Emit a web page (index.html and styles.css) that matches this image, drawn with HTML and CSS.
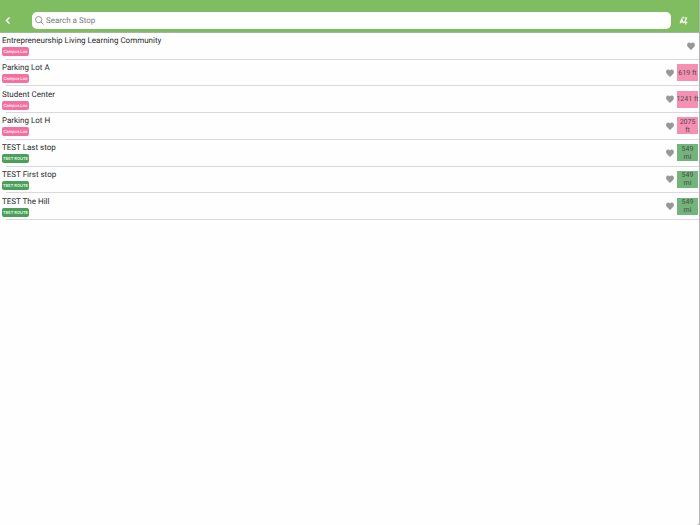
FILE: index.html
```
<!DOCTYPE html>
<html lang="en">
<head>
    <meta charset="UTF-8">
    <title>Stops</title>
    <meta name="viewport" content="width=device-width, initial-scale=1.0">
    <link rel="stylesheet" href="styles.css">
</head>
<body>
    <svg class="sprite" aria-hidden="true">
        <symbol id="heart" viewBox="0 0 16 16" preserveAspectRatio="none">
            <path d="M8 16 1.500 9.500C-1.200 6 .6 1.200 4.200 1 6 1 7.300 1.900 8 3.200 8.700 1.900 10 1 11.800 1 15.400 1.200 17.200 6 14.500 9.500Z"/>
        </symbol>
    </svg>
    <div class="app">
        <header class="topbar">
            <button class="icon-btn back" aria-label="Back">
                <svg viewBox="0 0 8 12"><path d="M6 2 2 6l4 4"/></svg>
            </button>
            <label class="search">
                <svg viewBox="0 0 16 16"><circle cx="6.500" cy="6.500" r="5.500"/><path d="m10.500 10.500 4.500 4.500"/></svg>
                <input type="search" placeholder="Search a Stop" aria-label="Search a Stop">
            </label>
            <button class="icon-btn sort" aria-label="Sort">
                <svg viewBox="0 0 16 16">
                    <path d="m2 13 3-8 3 8M3 10.500h4M9.500 3.500h4l-3.500 7.500h5"/>
                    <path d="m8 1-1 3M12 12v3"/>
                </svg>
            </button>
        </header>
        <ul class="stops">
            <li class="stop">
                <div class="info">
                    <span class="name">Entrepreneurship Living Learning Community</span>
                    <span class="route campus">Campus Loo</span>
                </div>
                <button class="fav" aria-label="Favorite"><svg><use href="#heart"/></svg></button>
            </li>
            <li class="stop">
                <div class="info">
                    <span class="name">Parking Lot A</span>
                    <span class="route campus">Campus Loo</span>
                </div>
                <button class="fav" aria-label="Favorite"><svg><use href="#heart"/></svg></button>
                <span class="distance near">619 ft</span>
            </li>
            <li class="stop">
                <div class="info">
                    <span class="name">Student Center</span>
                    <span class="route campus">Campus Loo</span>
                </div>
                <button class="fav" aria-label="Favorite"><svg><use href="#heart"/></svg></button>
                <span class="distance near">1241 ft</span>
            </li>
            <li class="stop">
                <div class="info">
                    <span class="name">Parking Lot H</span>
                    <span class="route campus">Campus Loo</span>
                </div>
                <button class="fav" aria-label="Favorite"><svg><use href="#heart"/></svg></button>
                <span class="distance near">2075<br>ft</span>
            </li>
            <li class="stop">
                <div class="info">
                    <span class="name">TEST Last stop</span>
                    <span class="route test">TEST ROUTE</span>
                </div>
                <button class="fav" aria-label="Favorite"><svg><use href="#heart"/></svg></button>
                <span class="distance far">549<br>mi</span>
            </li>
            <li class="stop">
                <div class="info">
                    <span class="name">TEST First stop</span>
                    <span class="route test">TEST ROUTE</span>
                </div>
                <button class="fav" aria-label="Favorite"><svg><use href="#heart"/></svg></button>
                <span class="distance far">549<br>mi</span>
            </li>
            <li class="stop">
                <div class="info">
                    <span class="name">TEST The Hill</span>
                    <span class="route test">TEST ROUTE</span>
                </div>
                <button class="fav" aria-label="Favorite"><svg><use href="#heart"/></svg></button>
                <span class="distance far">549<br>mi</span>
            </li>
        </ul>
    </div>
</body>
</html>
```
FILE: styles.css
```
:root {
    --bar: #80bc60;
    --pink: #f4709f;
    --pink-light: #f590b2;
    --green: #4aa058;
    --green-light: #72b47a;
    --line: #d9d9d9;
    --icon: #979797;
}
* {
    box-sizing: border-box;
}
body {
    margin: 0;
    background: #b4b4b4;
    color: #2b2b2b;
    font-family: Roboto, "Liberation Sans", sans-serif;
    font-size: 8px;
    text-rendering: geometricPrecision;
}
button {
    border: 0;
    padding: 0;
    background: none;
    cursor: pointer;
}
.sprite {
    position: absolute;
    width: 0;
    height: 0;
}
.app {
    min-height: 100vh;
    margin-right: 1px;
    background: #fefefe;
    border-bottom-right-radius: 3px;
}
.topbar {
    display: flex;
    align-items: center;
    padding: 12px 11px 3px 0;
    background: var(--bar);
    border-bottom: 1px solid #a5b79b;
}
.icon-btn {
    display: flex;
    justify-content: center;
    flex: none;
}
.icon-btn svg {
    fill: none;
    stroke: #fff;
}
.back {
    width: 16px;
    margin-right: 16px;
}
.back svg {
    width: 6px;
    height: 9px;
    stroke-width: 2;
}
.search {
    flex: 1;
    display: flex;
    align-items: center;
    gap: 2px;
    height: 17px;
    padding: 0 3px;
    background: #fff;
    border-radius: 5px;
}
.search svg {
    width: 9px;
    height: 9px;
    fill: none;
    stroke: #808080;
    stroke-width: 1.5;
}
.search input {
    flex: 1;
    min-width: 0;
    border: 0;
    padding: 0;
    background: none;
    outline: none;
    font: inherit;
    text-rendering: inherit;
}
.search input::placeholder {
    color: #7c7c7c;
}
.sort {
    margin-left: 8px;
}
.sort svg {
    width: 9px;
    height: 9px;
    stroke-width: 2;
}
.stops {
    display: grid;
    grid-auto-rows: 1fr;
    min-height: 187px;
    margin: 0;
    padding: 0;
    list-style: none;
}
.stop {
    display: flex;
    align-items: center;
    padding: 0 1px 1px 2px;
    background: linear-gradient(var(--line), var(--line)) 6px 100% / 100% 1px no-repeat;
}
.info {
    flex: 1;
    display: flex;
    flex-direction: column;
    align-items: flex-start;
    padding-bottom: 1px;
}
.name {
    line-height: 13px;
}
.route {
    width: 27px;
    border-radius: 2px;
    color: #fff;
    font-family: Inter, "Liberation Sans", sans-serif;
    font-size: 4px;
    font-weight: 500;
    line-height: 9px;
    text-align: center;
    white-space: nowrap;
}
.campus {
    background: var(--pink);
}
.test {
    background: var(--green);
}
.fav {
    display: flex;
    padding: 0 3px;
}
.fav svg {
    width: 8px;
    height: 8px;
    fill: var(--icon);
}
.distance {
    display: flex;
    align-items: center;
    justify-content: center;
    width: 21px;
    height: 17px;
    color: #4d4d4d;
    font-size: 7px;
    line-height: 8px;
    text-align: center;
    white-space: nowrap;
}
.near {
    background: var(--pink-light);
}
.far {
    background: var(--green-light);
}
```
